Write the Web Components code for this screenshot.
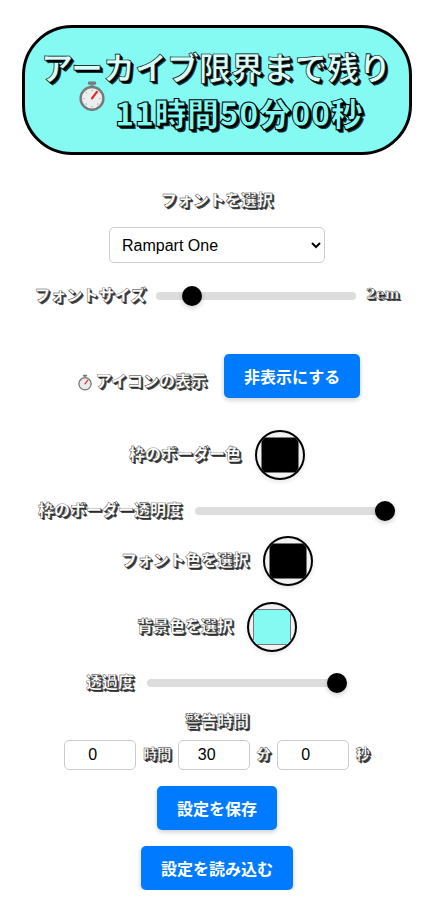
<!DOCTYPE html>
<html lang="ja">
<head>
<meta charset="utf-8">
<title>アーカイブ限界タイマー</title>
<style>
    html, body { margin: 0; background: #fff; }
    body {
        font-family: "Noto Sans CJK JP", "Liberation Sans", sans-serif;
        --rampart-shadow: 1px 1px 0 #2b2b2b, 2px 2px 0 #4a4a4a;
    }
    timer-app { display: block; }
</style>
</head>
<body>
<timer-app></timer-app>

<script>
const WATCH = `
    <svg viewBox="0 0 32 36" aria-hidden="true">
        <rect x="11" y="0" width="10" height="4" rx="1.5" fill="#77797c"/>
        <rect x="14" y="3" width="4" height="4" fill="#8a8c8f"/>
        <circle cx="16" cy="21" r="14" fill="#eceded" stroke="#77797c" stroke-width="3"/>
        <g fill="#b5b7b9">
            <circle cx="16" cy="11" r="1"/><circle cx="16" cy="31" r="1"/>
            <circle cx="6" cy="21" r="1"/><circle cx="26" cy="21" r="1"/>
            <circle cx="9" cy="14" r="1"/><circle cx="23" cy="28" r="1"/>
            <circle cx="9" cy="28" r="1"/><circle cx="23" cy="14" r="1"/>
        </g>
        <path d="M16 21 L22 13" stroke="#e3242b" stroke-width="2.6" stroke-linecap="round"/>
    </svg>`;

class CountdownBanner extends HTMLElement {
    connectedCallback() {
        this.inner = this.attachShadow({ mode: "open" });
        this.inner.innerHTML = `
            <style>
                :host {
                    display: flex;
                    flex-direction: column;
                    justify-content: center;
                    box-sizing: border-box;
                    width: 390px;
                    height: 130px;
                    margin: 25px auto 0;
                    border: 3px solid #000;
                    border-radius: 50px;
                    background: #84faf3;
                    color: #d8fffb;
                    font-size: 32px;
                    font-weight: 700;
                    line-height: 44px;
                    text-align: center;
                    white-space: nowrap;
                    -webkit-text-stroke: 0.6px #000;
                    text-shadow: 1px 1px 0 #000, 2px 2px 0 #000, 3px 3px 0 #1a3a3a;
                }
                .first { padding-right: 2px; }
                .second {
                    display: flex;
                    justify-content: center;
                    padding-left: 8px;
                    margin-bottom: 2px;
                }
                svg { width: 26px; height: 30px; margin: -7px 10px 0 0; }
                .time {
                    color: #84faf3;
                    font-weight: 900;
                    padding-top: 2px;
                    letter-spacing: 0.3px;
                    -webkit-text-stroke: 1px #000;
                }
            </style>
            <div class="first">アーカイブ限界まで残り</div>
            <div class="second">${WATCH}<span class="time">11時間50分00秒</span></div>
        `;
    }
}

class RampartText extends HTMLElement {
    connectedCallback() {
        this.inner = this.attachShadow({ mode: "open" });
        this.inner.innerHTML = `
            <style>
                :host {
                    display: block;
                    height: 24px;
                    color: #fff;
                    font-size: var(--label-size, 16px);
                    font-weight: 900;
                    line-height: 20px;
                    white-space: nowrap;
                    -webkit-text-stroke: 0.4px #333;
                    text-shadow: var(--rampart-shadow);
                }
            </style>
            <slot></slot>
        `;
    }
}

class SliderRow extends HTMLElement {
    connectedCallback() {
        this.inner = this.attachShadow({ mode: "open" });
        this.inner.innerHTML = `
            <style>
                :host {
                    display: flex;
                    justify-content: center;
                    align-items: center;
                    gap: 13px;
                    height: 24px;
                    padding-right: 1px;
                }
                input {
                    appearance: none;
                    flex: none;
                    width: 200px;
                    height: 8px;
                    margin: 0;
                    border-radius: 5px;
                    background: #ddd;
                }
                input::-webkit-slider-thumb {
                    appearance: none;
                    width: 20px;
                    height: 20px;
                    border-radius: 50%;
                    background: #000;
                    box-shadow: 0 2px 5px rgba(0, 0, 0, 0.2);
                }
            </style>
            <rampart-text>${this.getAttribute("label")}</rampart-text>
            <input type="range" min="${this.getAttribute("min")}" max="${this.getAttribute("max")}"
                step="${this.getAttribute("step") || 1}" value="${this.getAttribute("value")}">
            <slot></slot>
        `;
    }
}

class ColorRow extends HTMLElement {
    connectedCallback() {
        this.inner = this.attachShadow({ mode: "open" });
        this.inner.innerHTML = `
            <style>
                :host {
                    display: flex;
                    justify-content: center;
                    align-items: center;
                    gap: 14px;
                }
                input {
                    flex: none;
                    box-sizing: border-box;
                    width: 50px;
                    height: 50px;
                    margin: 0;
                    padding: 1px 2px;
                    border: 2px solid #000;
                    border-radius: 50%;
                    background: #f2f2f2;
                    box-shadow: 0 2px 5px rgba(0, 0, 0, 0.1);
                }
            </style>
            <rampart-text>${this.getAttribute("label")}</rampart-text>
            <input type="color" value="${this.getAttribute("value")}">
        `;
    }
}

class ActionButton extends HTMLElement {
    connectedCallback() {
        this.inner = this.attachShadow({ mode: "open" });
        this.inner.innerHTML = `
            <style>
                :host { display: block; flex: none; }
                button {
                    display: block;
                    height: 44px;
                    margin: 0 auto;
                    padding: 0 20px;
                    border: none;
                    border-radius: 5px;
                    background: #007bff;
                    color: #fff;
                    font: 700 16px/24px "Noto Sans CJK JP", "Liberation Sans", sans-serif;
                    box-shadow: 0 2px 5px rgba(0, 0, 0, 0.2);
                }
            </style>
            <button><slot></slot></button>
        `;
    }
}

class TimeFields extends HTMLElement {
    connectedCallback() {
        this.inner = this.attachShadow({ mode: "open" });
        let field = (value, unit) => `
            <input type="number" value="${value}">
            <rampart-text>${unit}</rampart-text>`;
        this.inner.innerHTML = `
            <style>
                :host {
                    display: flex;
                    justify-content: center;
                    align-items: center;
                    gap: 6.5px;
                    --label-size: 14px;
                }
                rampart-text:nth-of-type(1) { margin: 0 0.5px; }
                input {
                    box-sizing: border-box;
                    flex: none;
                    width: 72px;
                    height: 30px;
                    margin: 0;
                    padding: 0 5px;
                    border: 1px solid #ccc;
                    border-radius: 5px;
                    background: #fff;
                    color: #000;
                    font: 16px "Liberation Sans", sans-serif;
                    text-align: center;
                }
            </style>
            ${field(0, "時間")}${field(30, "分")}${field(0, "秒")}
        `;
    }
}

class TimerApp extends HTMLElement {
    connectedCallback() {
        this.inner = this.attachShadow({ mode: "open" });
        this.inner.innerHTML = `
            <style>
                :host { display: block; width: 434px; }
                rampart-text.title { text-align: center; }
                select {
                    display: block;
                    box-sizing: border-box;
                    width: 216px;
                    height: 36px;
                    margin: 15px auto 0;
                    padding: 0 8px;
                    border: 1px solid #ccc;
                    border-radius: 5px;
                    background: #fff;
                    color: #000;
                    font: 16px "Liberation Sans", sans-serif;
                }
                .value {
                    font-family: "DejaVu Serif", serif;
                    --label-size: 14px;
                }
                .icon-row {
                    display: flex;
                    justify-content: center;
                    gap: 17px;
                    margin-top: 46px;
                    padding-left: 4px;
                }
                .icon-label {
                    display: flex;
                    align-items: center;
                    gap: 4px;
                    padding-top: 12px;
                }
                .icon-label svg { width: 14px; height: 17px; }
            </style>

            <countdown-banner></countdown-banner>

            <rampart-text class="title" style="margin-top:34px;margin-bottom:-1px">フォントを選択</rampart-text>
            <select><option>Rampart One</option></select>

            <slider-row label="フォントサイズ" min="1" max="8" step="0.1" value="2" style="margin-top:21px;gap:10px;padding-right:0">
                <rampart-text class="value">2em</rampart-text>
            </slider-row>

            <div class="icon-row">
                <div class="icon-label">${WATCH}<rampart-text>アイコンの表示</rampart-text></div>
                <action-button>非表示にする</action-button>
            </div>

            <color-row label="枠のボーダー色" value="#000000" style="margin-top:32px"></color-row>
            <slider-row label="枠のボーダー透明度" min="0" max="1" step="0.01" value="1" style="margin-top:19px"></slider-row>
            <color-row label="フォント色を選択" value="#000000" style="margin-top:13px"></color-row>
            <color-row label="背景色を選択" value="#84faf3" style="margin-top:16px"></color-row>
            <slider-row label="透過度" min="0" max="1" step="0.01" value="1" style="margin-top:19px"></slider-row>

            <rampart-text class="title" style="margin-top:15px">警告時間</rampart-text>
            <time-fields style="margin-top:6px"></time-fields>

            <action-button style="margin-top:16px">設定を保存</action-button>
            <action-button style="margin-top:16px">設定を読み込む</action-button>
        `;
    }
}

customElements.define("countdown-banner", CountdownBanner);
customElements.define("rampart-text", RampartText);
customElements.define("slider-row", SliderRow);
customElements.define("color-row", ColorRow);
customElements.define("action-button", ActionButton);
customElements.define("time-fields", TimeFields);
customElements.define("timer-app", TimerApp);
</script>
</body>
</html>
